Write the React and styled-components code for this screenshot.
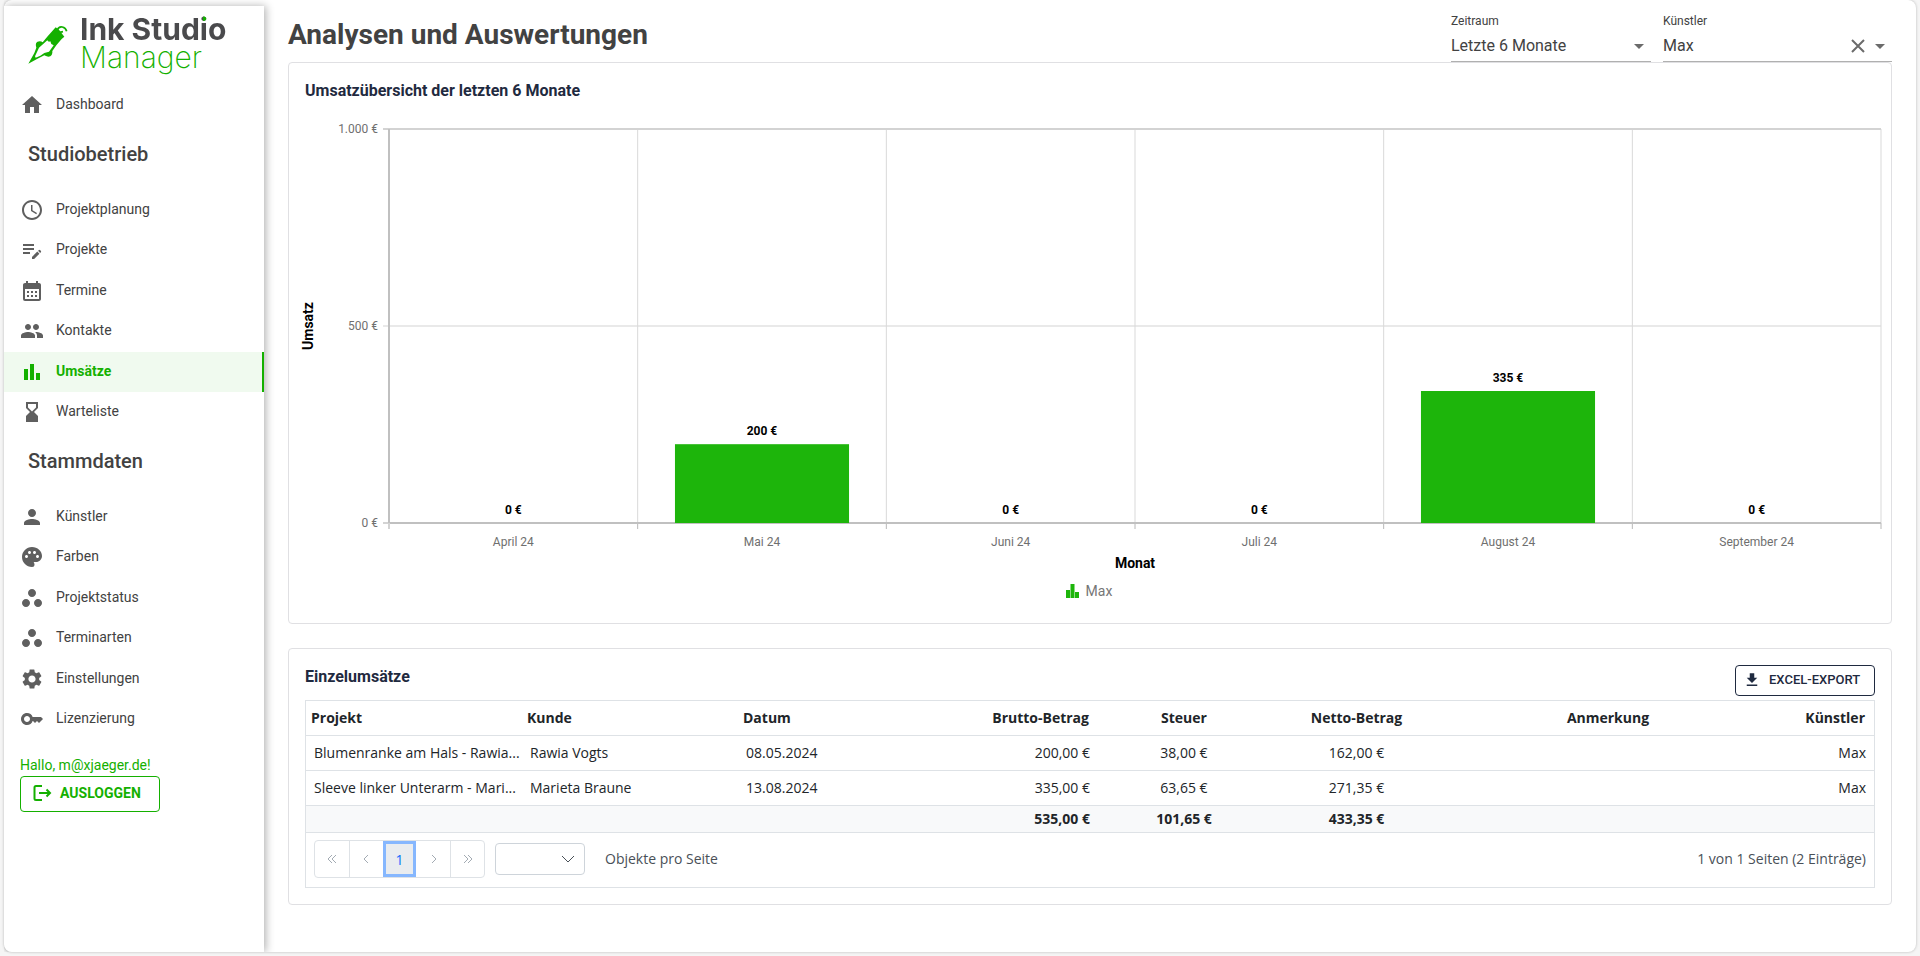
import React from 'react';
import styled, { createGlobalStyle } from 'styled-components';
import {
  MdHome, MdSchedule, MdEditNote, MdCalendarMonth, MdPeople, MdHourglassBottom,
  MdPerson, MdPalette, MdWorkspaces, MdSettings, MdKey, MdDownload,
} from 'react-icons/md';

const GREEN = '#14b000';
const UI = "Roboto, 'Liberation Sans', sans-serif";
const GRID = "'Open Sans', 'Noto Sans', sans-serif";

const GlobalStyle = createGlobalStyle`
  *, *::before, *::after { box-sizing: border-box; }
  body { margin: 0; background: #f5f5f5; color: #424242; font-family: ${UI}; font-size: 14px; }
  h1, h2, p, ul { margin: 0; padding: 0; }
  button, select { font-family: inherit; }
`;

const Shell = styled.div`
  display: flex;
  min-height: calc(100vh - 4px);
  margin: 0 4px 4px;
  background: #fff;
  border-radius: 8px;
  box-shadow: 0 0 3px rgba(0, 0, 0, 0.25);
`;

const Sidebar = styled.aside`
  flex: 0 0 260px;
  margin-top: 6px;
  background: #fff;
  border-bottom-left-radius: 8px;
  box-shadow: 2px 0 8px rgba(0, 0, 0, 0.3);
  clip-path: inset(-6px -16px 0 0);
`;

const Brand = styled.a`
  display: flex;
  height: 79px;
  padding: 4px 0 0 23px;
  gap: 11px;
  text-decoration: none;
  svg { margin-top: 15px; }
`;

const BrandText = styled.span`
  display: flex;
  flex-direction: column;
  padding-top: 5px;
  font-family: Inter, sans-serif;
  font-size: 30px;
  line-height: 28px;
  color: #4a4a4c;
`;

const BrandTop = styled.span`
  font-weight: 700;
  background: linear-gradient(${GREEN}, ${GREEN}) 123px 0 / 9px 7px no-repeat, #4a4a4c;
  background-clip: text;
  color: transparent;
`;

const BrandBottom = styled.span`
  font-weight: 200;
  color: ${GREEN};
`;

const NavHeading = styled.h2`
  margin: 17px 24px 24px;
  font-size: 20px;
  line-height: 24px;
  font-weight: 500;
`;

const NavList = styled.ul`
  display: flex;
  flex-direction: column;
  justify-content: space-between;
  min-height: ${(p) => (p.$single ? 40 : 242)}px;
  list-style: none;
`;

const NavLink = styled.a`
  display: flex;
  align-items: center;
  height: 40px;
  padding-left: 16px;
  gap: 12px;
  border-right: 2px solid ${(p) => (p.$active ? GREEN : 'transparent')};
  background: ${(p) => (p.$active ? '#f0faef' : 'transparent')};
  color: ${(p) => (p.$active ? GREEN : '#424242')};
  font-weight: ${(p) => (p.$active ? 700 : 400)};
  line-height: 20px;
  text-decoration: none;
  svg { flex: none; color: ${(p) => (p.$active ? GREEN : '#5f5f5f')}; }
  span { padding-bottom: 2px; }
`;

const Account = styled.div`
  padding: 16px 16px 0;
  color: ${GREEN};
  line-height: 21px;
`;

const OutlineButton = styled.button`
  display: inline-flex;
  align-items: center;
  gap: 8px;
  width: 140px;
  height: ${(p) => (p.$small ? 31 : 36)}px;
  padding: 0 0 2px ${(p) => (p.$small ? 7 : 11)}px;
  border: 1px solid currentColor;
  border-radius: 4px;
  background: #fff;
  color: ${(p) => (p.$small ? '#1f2a40' : GREEN)};
  font-size: ${(p) => (p.$small ? 13 : 14)}px;
  font-weight: ${(p) => (p.$small ? 500 : 700)};
  line-height: 20px;
  cursor: pointer;
`;

const Main = styled.main`
  flex: 1;
  min-width: 0;
  padding: 0 24px;
`;

const Header = styled.header`
  display: flex;
  justify-content: space-between;
  height: 62px;
`;

const Title = styled.h1`
  padding-top: 19px;
  font-size: 28px;
  line-height: 32px;
  font-weight: 700;
`;

const Filters = styled.div`
  display: flex;
  gap: 12px;
`;

const Field = styled.div`
  display: flex;
  flex-direction: column;
  width: ${(p) => p.$width}px;
  padding-top: 13px;
  border-bottom: 1px solid #b0b0b0;
  label { font-size: 12px; line-height: 16px; }
`;

const FieldRow = styled.div`
  display: flex;
  align-items: center;
  height: 32px;
  padding-top: 2px;
  svg { flex: none; pointer-events: none; }
`;

const FieldSelect = styled.select`
  flex: 1;
  min-width: 0;
  padding: 0;
  border: 0;
  background: transparent;
  appearance: none;
  color: #424242;
  font-size: 16px;
  line-height: 24px;
`;

const ClearButton = styled.button`
  display: flex;
  padding: 0;
  border: 0;
  background: none;
  color: #6b6b6b;
`;

const Card = styled.section`
  margin-bottom: 24px;
  border: 1px solid #e0e0e3;
  border-radius: 4px;
  background: #fff;
`;

const CardTitle = styled.h2`
  font-size: 16px;
  line-height: 24px;
  font-weight: 700;
  color: #1f2a40;
`;

const ChartTitle = styled(CardTitle)`
  padding: 16px 16px 0;
`;

const Plot = styled.div`
  padding: 26px 10px 0 100px;
  svg { display: block; width: 100%; height: 442px; overflow: visible; }
`;

const Legend = styled.div`
  display: flex;
  justify-content: center;
  align-items: center;
  gap: 7px;
  height: 52px;
  padding: 0 2px 12px 0;
  line-height: 20px;
  color: #767676;
`;

const TableCard = styled(Card)`
  padding: 16px;
`;

const TableHead = styled.div`
  display: flex;
  justify-content: space-between;
  height: 35px;
`;

const GridBox = styled.div`
  border: 1px solid #dee2e6;
  overflow-x: auto;
  font-family: ${GRID};
`;

const Table = styled.table`
  width: 100%;
  table-layout: fixed;
  border-collapse: separate;
  border-spacing: 0;
  color: #212529;
  line-height: 20px;
  white-space: nowrap;
  th, td { border-bottom: 1px solid #dee2e6; font-size: 14px; }
  tfoot td { height: 27px; background: #f8f9fa; font-weight: 700; }
`;

const Th = styled.th`
  height: 35px;
  padding: ${(p) => (p.$align === 'center' ? 0 : '0 9px 0 5px')};
  text-align: ${(p) => p.$align || 'left'};
  font-weight: 700;
`;

const Td = styled.td`
  height: 35px;
  padding: 0 8px;
  text-align: ${(p) => p.$align || 'left'};
`;

const Pager = styled.div`
  display: flex;
  align-items: center;
  height: 54px;
  padding: 0 8px 2px;
  color: #495057;
  line-height: 20px;
`;

const PageButtons = styled.div`
  display: flex;
  width: 171px;
  height: 38px;
  border: 1px solid #dee2e6;
  border-radius: 4px;
`;

const PageButton = styled.button`
  display: flex;
  width: 34px;
  align-items: center;
  justify-content: center;
  padding: 0;
  border: 0;
  border-left: 1px solid ${(p) => (p.$first ? 'transparent' : '#dee2e6')};
  background: transparent;
  color: #a3abb3;
`;

const CurrentPage = styled(PageButton)`
  border: 3px solid #86b7fe;
  background: #e9ecef;
  color: #0d6efd;
  font-size: 14px;
`;

const PageSize = styled.label`
  display: flex;
  align-items: center;
  margin-left: 10px;
  gap: 20px;
`;

const SizeBox = styled.span`
  display: flex;
  align-items: center;
  width: 90px;
  height: 32px;
  padding-right: 8px;
  border: 1px solid #ced4da;
  border-radius: 4px;
`;

const PageInfo = styled.span`
  margin-left: auto;
`;

const BarIcon = ({ size = 24 }) => (
  <svg width={size} height={size} viewBox="0 0 24 24" fill="currentColor" aria-hidden="true">
    <path d="M4 9h4v11H4zM10 4h4v16h-4zM16 13h4v7h-4z" />
  </svg>
);

const LogoutIcon = () => (
  <svg width="20" height="20" viewBox="0 0 20 20" fill="none" stroke="currentColor" strokeWidth="2" aria-hidden="true">
    <path d="M10 3H4Q2.500 3 2.500 4.500V15.500Q2.500 17 4 17H10M7 10H18M14.500 6.500L18 10L14.500 13.500" />
  </svg>
);

const PenLogo = () => (
  <svg width="42" height="42" viewBox="0 0 126 126" aria-hidden="true">
    <path fill={GREEN} d="M4 116L22 84L28 68Q22 50 38 49Q44 49 47 52L62 34L86 7L96 14L112 35L104 42L88 61L76 78Q78 94 64 95Q56 94 52 91L30 102Z" />
    <path fill="#fff" d="M24 94L36 68L61 46Q64 52 70 49L73 57L80 61L66 80L52 84L40 92L26 98Z" />
    <path fill="none" stroke={GREEN} strokeWidth="5" d="M91 15Q95 4 106 6Q116 8 119 19M98 22L108 20" />
  </svg>
);

const Caret = () => (
  <svg width="24" height="24" viewBox="0 0 24 24" fill="#6b6b6b" aria-hidden="true"><path d="M7 10l5 5 5-5z" /></svg>
);

const STUDIO = [
  ['Projektplanung', MdSchedule],
  ['Projekte', MdEditNote],
  ['Termine', MdCalendarMonth],
  ['Kontakte', MdPeople],
  ['Umsätze', BarIcon],
  ['Warteliste', MdHourglassBottom],
];

const STAMMDATEN = [
  ['Künstler', MdPerson],
  ['Farben', MdPalette],
  ['Projektstatus', MdWorkspaces],
  ['Terminarten', MdWorkspaces],
  ['Einstellungen', MdSettings],
  ['Lizenzierung', MdKey],
];

const NavItems = ({ items, single }) => (
  <NavList $single={single}>
    {items.map(([label, Icon]) => (
      <li key={label}>
        <NavLink href="#" $active={label === 'Umsätze'}>
          <Icon size={24} />
          <span>{label}</span>
        </NavLink>
      </li>
    ))}
  </NavList>
);

const REVENUE = [
  ['April 24', 0], ['Mai 24', 200], ['Juni 24', 0],
  ['Juli 24', 0], ['August 24', 335], ['September 24', 0],
];
const PLOT_H = 394;

const AxisText = styled.text`
  font-size: 12px;
  fill: #6f6f6f;
  text-anchor: ${(p) => p.$anchor || 'middle'};
`;

const StrongText = styled.text`
  font-size: ${(p) => p.$size}px;
  font-weight: 700;
  fill: #000;
  text-anchor: middle;
`;

const RevenueChart = () => {
  const step = 100 / REVENUE.length;
  return (
    <svg role="img" aria-label="Umsatz pro Monat">
      <line x1="-6" x2="100%" y1="197" y2="197" stroke="#e9e9e9" strokeWidth="2" />
      {REVENUE.map(([month], i) => (
        <line key={month} x1={`${step * (i + 1)}%`} x2={`${step * (i + 1)}%`} y1="0" y2={PLOT_H} stroke="#d9d9d9" />
      ))}
      {REVENUE.map(([month], i) => (
        <line key={month} x1={`${step * (i + 1)}%`} x2={`${step * (i + 1)}%`} y1={PLOT_H} y2={PLOT_H + 6} stroke="#b8b8b8" />
      ))}
      <line x1="-6" x2="100%" y1="0" y2="0" stroke="#d3d3d3" strokeWidth="2" />
      <line x1="-6" x2="0" y1={PLOT_H} y2={PLOT_H} stroke="#d3d3d3" strokeWidth="2" />
      <line x1="0" x2="100%" y1={PLOT_H} y2={PLOT_H} stroke="#c0c0c0" strokeWidth="2" />
      <line x1="0" x2="0" y1="0" y2={PLOT_H} stroke="#c0c0c0" strokeWidth="2" />
      <line x1="0" x2="0" y1={PLOT_H} y2={PLOT_H + 6} stroke="#d3d3d3" strokeWidth="2" />
      {REVENUE.map(([month, value], i) => {
        const h = (value / 1000) * PLOT_H;
        const mid = `${step * (i + 0.5)}%`;
        return (
          <g key={month}>
            {value > 0 && (
              <rect x={`${step * (i + 0.15)}%`} width={`${step * 0.7}%`} y={PLOT_H - h} height={h} fill="#1db50b" />
            )}
            <StrongText $size={12} x={mid} y={PLOT_H - h - 9}>{value} €</StrongText>
            <AxisText x={mid} y={PLOT_H + 23}>{month}</AxisText>
          </g>
        );
      })}
      <AxisText $anchor="end" x="-11" y="4">1.000 €</AxisText>
      <AxisText $anchor="end" x="-11" y="201">500 €</AxisText>
      <AxisText $anchor="end" x="-11" y={PLOT_H + 4}>0 €</AxisText>
      <StrongText $size={14} transform="translate(-76 197) rotate(-90)">Umsatz</StrongText>
      <StrongText $size={14} x="50%" y={PLOT_H + 45}>Monat</StrongText>
    </svg>
  );
};

const ROWS = [
  ['Blumenranke am Hals - Rawia...', 'Rawia Vogts', '08.05.2024', '200,00 €', '38,00 €', '162,00 €', '', 'Max'],
  ['Sleeve linker Unterarm - Mari...', 'Marieta Braune', '13.08.2024', '335,00 €', '63,65 €', '271,35 €', '', 'Max'],
];
const COLUMNS = [
  ['Projekt', 216], ['Kunde', 216], ['Datum', 216],
  ['Brutto-Betrag', 144, 'right'], ['Steuer', 172, 'center'], ['Netto-Betrag', 173, 'center'],
  ['Anmerkung', null, 'center'], ['Künstler', 101, 'right'],
];
const TOTALS = ['', '', '', '535,00 €', '101,65 €', '433,35 €', '', ''];

const Chevron = ({ d }) => (
  <svg width="16" height="16" viewBox="0 0 16 16" fill="none" stroke="currentColor" strokeWidth="1" aria-hidden="true"><path d={d} /></svg>
);

export default function App() {
  return (
    <>
      <GlobalStyle />
      <Shell>
        <Sidebar>
          <Brand href="#">
            <PenLogo />
            <BrandText>
              <BrandTop>Ink Studio</BrandTop>
              <BrandBottom>Manager</BrandBottom>
            </BrandText>
          </Brand>
          <nav>
            <NavItems items={[['Dashboard', MdHome]]} single />
            <NavHeading>Studiobetrieb</NavHeading>
            <NavItems items={STUDIO} />
            <NavHeading>Stammdaten</NavHeading>
            <NavItems items={STAMMDATEN} />
          </nav>
          <Account>
            <p>Hallo, m@xjaeger.de!</p>
            <OutlineButton type="button"><LogoutIcon />AUSLOGGEN</OutlineButton>
          </Account>
        </Sidebar>
        <Main>
          <Header>
            <Title>Analysen und Auswertungen</Title>
            <Filters>
              <Field $width={200}>
                <label htmlFor="range">Zeitraum</label>
                <FieldRow>
                  <FieldSelect id="range"><option>Letzte 6 Monate</option></FieldSelect>
                  <Caret />
                </FieldRow>
              </Field>
              <Field $width={229}>
                <label htmlFor="artist">Künstler</label>
                <FieldRow>
                  <FieldSelect id="artist"><option>Max</option></FieldSelect>
                  <ClearButton type="button" aria-label="Auswahl löschen">
                    <svg width="20" height="20" viewBox="0 0 20 20" stroke="currentColor" strokeWidth="2"><path d="M4 4L16 16M16 4L4 16" /></svg>
                  </ClearButton>
                  <Caret />
                </FieldRow>
              </Field>
            </Filters>
          </Header>
          <Card>
            <ChartTitle>Umsatzübersicht der letzten 6 Monate</ChartTitle>
            <Plot><RevenueChart /></Plot>
            <Legend>
              <svg width="13" height="14" viewBox="0 0 13 14" fill="#1db50b" aria-hidden="true">
                <path d="M0 6h4v8H0zM4.500 0h4v14h-4zM9 8h4v6H9z" />
              </svg>
              Max
            </Legend>
          </Card>
          <TableCard>
            <TableHead>
              <CardTitle>Einzelumsätze</CardTitle>
              <OutlineButton type="button" $small><MdDownload size={18} />EXCEL-EXPORT</OutlineButton>
            </TableHead>
            <GridBox>
              <Table>
                <colgroup>
                  {COLUMNS.map(([name, width]) => <col key={name} width={width ?? undefined} />)}
                </colgroup>
                <thead>
                  <tr>{COLUMNS.map(([name, , align]) => <Th key={name} $align={align}>{name}</Th>)}</tr>
                </thead>
                <tbody>
                  {ROWS.map((row) => (
                    <tr key={row[0]}>
                      {row.map((cell, i) => <Td key={COLUMNS[i][0]} $align={COLUMNS[i][2]}>{cell}</Td>)}
                    </tr>
                  ))}
                </tbody>
                <tfoot>
                  <tr>{TOTALS.map((cell, i) => <Td key={COLUMNS[i][0]} $align={COLUMNS[i][2]}>{cell}</Td>)}</tr>
                </tfoot>
              </Table>
              <Pager>
                <PageButtons>
                  <PageButton type="button" aria-label="Erste Seite" $first><Chevron d="M8 4L4 8L8 12M12 4L8 8L12 12" /></PageButton>
                  <PageButton type="button" aria-label="Vorherige Seite"><Chevron d="M10 4L6 8L10 12" /></PageButton>
                  <CurrentPage type="button" aria-current="page">1</CurrentPage>
                  <PageButton type="button" aria-label="Nächste Seite" $first><Chevron d="M6 4L10 8L6 12" /></PageButton>
                  <PageButton type="button" aria-label="Letzte Seite"><Chevron d="M4 4L8 8L4 12M8 4L12 8L8 12" /></PageButton>
                </PageButtons>
                <PageSize>
                  <SizeBox>
                    <FieldSelect defaultValue=""><option value="" /></FieldSelect>
                    <Chevron d="M2 5L8 11L14 5" />
                  </SizeBox>
                  Objekte pro Seite
                </PageSize>
                <PageInfo>1 von 1 Seiten (2 Einträge)</PageInfo>
              </Pager>
            </GridBox>
          </TableCard>
        </Main>
      </Shell>
    </>
  );
}
